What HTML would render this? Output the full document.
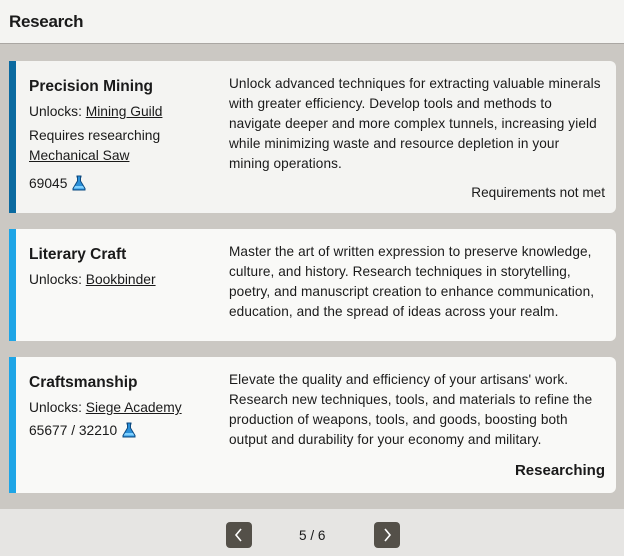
<!DOCTYPE html>
<html><head><style>
*{margin:0;padding:0;box-sizing:border-box}
body{width:624px;height:556px;overflow:hidden;font-family:"Liberation Sans",sans-serif;color:#1a1a1a;background:#cbc8c3;position:relative}
.hdr{position:absolute;left:0;top:0;width:624px;height:44px;background:#f4f4f2;border-bottom:1px solid #aaa7a3}
.hdr h1{position:absolute;left:9px;top:12px;font-size:17px;font-weight:bold;letter-spacing:-0.3px}
.card{position:absolute;left:9px;width:607px;background:#f9f9f7;border-radius:0 6px 6px 0;border-left:7px solid #1ea5e6}
.card.c1{background:#f4f4f2;border-left-color:#0b6aa0}
.l{position:absolute;left:13px;font-size:13.8px;line-height:20px;white-space:nowrap}
.l div{position:absolute;left:0}
.t{font-size:15.5px;font-weight:bold}
.d{position:absolute;left:213px;top:13px;font-size:13.6px;line-height:20px;white-space:nowrap;letter-spacing:0.1px}
u{text-decoration:underline}
.st{position:absolute;right:11px;font-size:13.6px}
.ft{position:absolute;left:0;top:509px;width:624px;height:47px;background:#e6e5e3}
.btn{position:absolute;top:13px;width:26px;height:26px;background:#545049;border-radius:4px}
.pg{position:absolute;left:299px;top:19px;font-size:13.6px}
.flask{display:inline-block;vertical-align:-3px;margin-left:4px}
</style></head><body>
<div class="hdr"><h1>Research</h1></div>

<div class="card c1" style="top:61px;height:152px">
 <div class="l" style="top:0">
  <div class="t" style="top:16px">Precision Mining</div>
  <div style="top:41px">Unlocks: <u>Mining Guild</u></div>
  <div style="top:65px">Requires researching</div>
  <div style="top:85px"><u>Mechanical Saw</u></div>
  <div style="top:113px">69045<svg class="flask" width="16" height="16" viewBox="0 0 16 16"><path d="M6 1h4v1H9.5v4L14 13.5V15H2v-1.5L6.5 6V2H6z" fill="#2a8fd8" stroke="#0d4a80" stroke-width="1"/><path d="M4 11h8l1.3 2.5H2.7z" fill="#7fd0ff"/></svg></div>
 </div>
 <div class="d">Unlock advanced techniques for extracting valuable minerals<br>with greater efficiency. Develop tools and methods to<br>navigate deeper and more complex tunnels, increasing yield<br>while minimizing waste and resource depletion in your<br>mining operations.</div>
 <div class="st" style="top:124px">Requirements not met</div>
</div>

<div class="card" style="top:229px;height:112px">
 <div class="l" style="top:0">
  <div class="t" style="top:16px">Literary Craft</div>
  <div style="top:41px">Unlocks: <u>Bookbinder</u></div>
 </div>
 <div class="d">Master the art of written expression to preserve knowledge,<br>culture, and history. Research techniques in storytelling,<br>poetry, and manuscript creation to enhance communication,<br>education, and the spread of ideas across your realm.</div>
</div>

<div class="card" style="top:357px;height:136px">
 <div class="l" style="top:0">
  <div class="t" style="top:16px">Craftsmanship</div>
  <div style="top:41px">Unlocks: <u>Siege Academy</u></div>
  <div style="top:64px">65677 / 32210<svg class="flask" width="16" height="16" viewBox="0 0 16 16"><path d="M6 1h4v1H9.5v4L14 13.5V15H2v-1.5L6.5 6V2H6z" fill="#2a8fd8" stroke="#0d4a80" stroke-width="1"/><path d="M4 11h8l1.3 2.5H2.7z" fill="#7fd0ff"/></svg></div>
 </div>
 <div class="d">Elevate the quality and efficiency of your artisans' work.<br>Research new techniques, tools, and materials to refine the<br>production of weapons, tools, and goods, boosting both<br>output and durability for your economy and military.</div>
 <div class="st" style="top:105px;font-size:15px;font-weight:bold">Researching</div>
</div>

<div class="ft">
 <div class="btn" style="left:226px"><svg width="26" height="26"><path d="M15 7l-5 6 5 6" stroke="#fff" stroke-width="1.6" fill="none"/></svg></div>
 <div class="pg">5 / 6</div>
 <div class="btn" style="left:374px"><svg width="26" height="26"><path d="M11 7l5 6-5 6" stroke="#fff" stroke-width="1.6" fill="none"/></svg></div>
</div>
</body></html>
